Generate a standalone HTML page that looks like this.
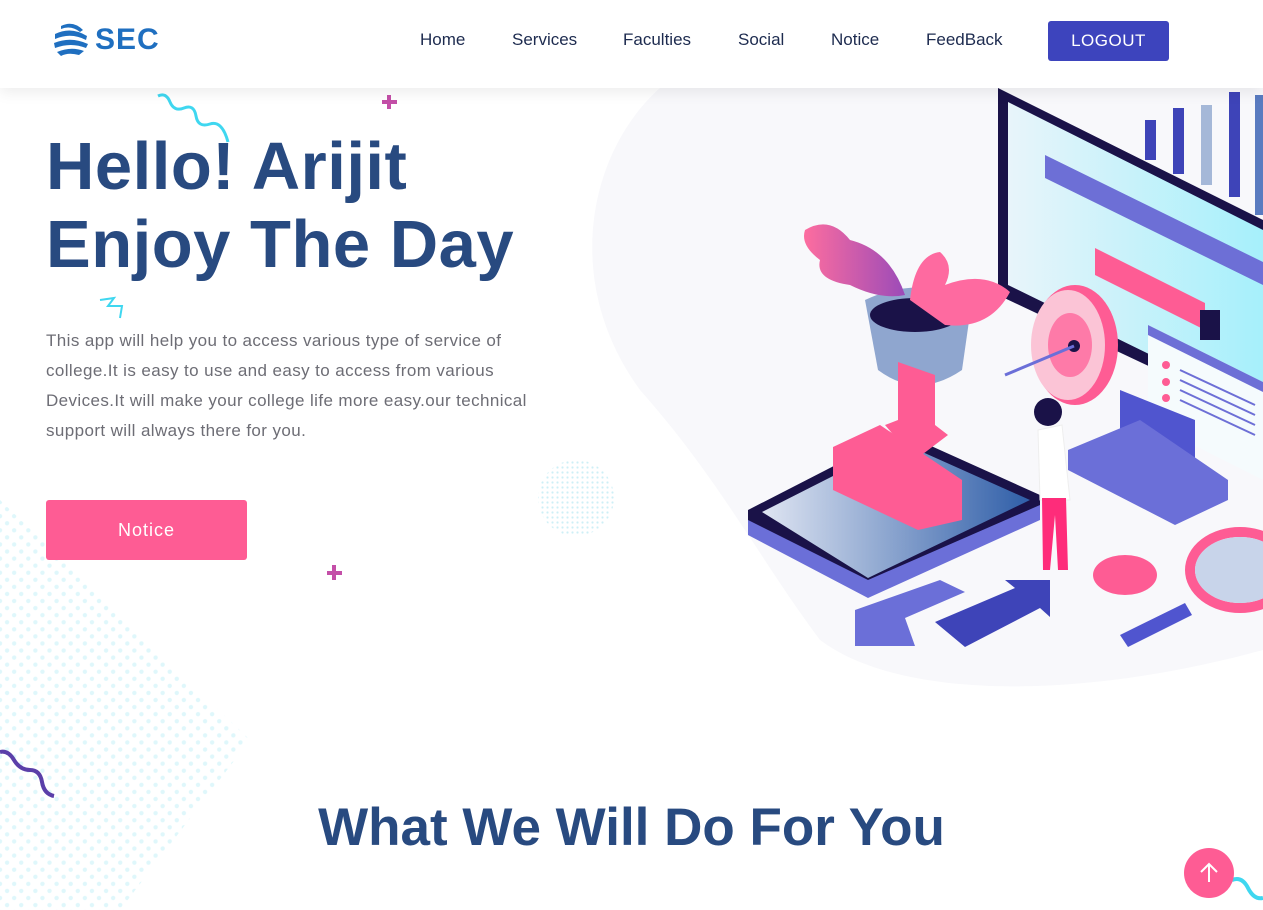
<!DOCTYPE html>
<html><head><meta charset="utf-8"><style>
*{margin:0;padding:0;box-sizing:border-box}
body{width:1263px;height:910px;overflow:hidden;background:#fff;font-family:"Liberation Sans",sans-serif;position:relative}
.nav{position:absolute;top:0;left:0;width:1263px;height:88px;background:#fff;box-shadow:0 4px 14px rgba(0,0,0,.08);z-index:5}
.logo{position:absolute;left:53px;top:22px;display:flex;align-items:center}
.logo span{font-weight:bold;font-size:30px;color:#1f6fc0;margin-left:6px;letter-spacing:1px}
.nav a{position:absolute;top:30px;font-size:17px;color:#1d2b4f;text-decoration:none}
.btn{position:absolute;left:1048px;top:21px;width:121px;height:40px;background:#3d44bd;color:#fff;border-radius:3px;font-size:17px;text-align:center;line-height:40px;letter-spacing:.5px}
h1{position:absolute;left:46px;top:128px;font-size:67px;line-height:78px;color:#284a80;font-weight:bold;letter-spacing:.5px;z-index:2}
p.d{position:absolute;left:46px;top:326px;width:500px;font-size:17px;line-height:30px;color:#6d6d75;letter-spacing:.4px;z-index:2}
.nb{position:absolute;left:46px;top:500px;width:201px;height:60px;background:#fe5c94;border-radius:3px;color:#fff;font-size:18px;text-align:center;line-height:60px;letter-spacing:1px;z-index:2}
h2{position:absolute;left:0;width:1263px;text-align:center;top:797px;font-size:53px;color:#284a80;font-weight:bold}
.up{position:absolute;left:1184px;top:848px;width:50px;height:50px;border-radius:50%;background:#fe5c94;z-index:3}
</style></head><body>
<svg style="position:absolute;left:0;top:0" width="1263" height="910">
<defs>
<pattern id="dt" width="10" height="10" patternUnits="userSpaceOnUse" patternTransform="rotate(45)"><circle cx="5" cy="5" r="2.2" fill="#dff7fb"/></pattern>
<pattern id="dt2" width="5" height="5" patternUnits="userSpaceOnUse"><circle cx="2.5" cy="2.5" r="1.1" fill="#cdeff6"/></pattern>
<linearGradient id="g1" x1="0" x2="1"><stop offset="0" stop-color="#dfe5f2"/><stop offset="1" stop-color="#2f5ea8"/></linearGradient>
<linearGradient id="g2" x1="0" x2="1"><stop offset="0" stop-color="#e8f4fa"/><stop offset="1" stop-color="#a6f0fb"/></linearGradient>
<linearGradient id="g3" x1="0" x2="1"><stop offset="0" stop-color="#fd6d9f"/><stop offset="1" stop-color="#9c4bb8"/></linearGradient>
</defs>
<polygon points="0,500 250,740 120,910 0,910" fill="url(#dt)"/>
<circle cx="576" cy="498" r="38" fill="url(#dt2)"/>
<path d="M660,88 C590,150 560,280 640,390 C720,480 760,560 820,640 C900,700 1080,700 1263,650 L1263,88Z" fill="#f8f8fb"/>
<polygon points="998,88 1263,220 1263,420 998,295" fill="#1a1248"/>
<polygon points="1008,102 1263,230 1263,410 1008,285" fill="url(#g2)"/>
<polygon points="1045,155 1263,262 1263,285 1045,178" fill="#6d6fd6"/>
<polygon points="1095,248 1205,303 1205,330 1095,275" fill="#fe5c94"/>
<rect x="1200" y="310" width="20" height="30" fill="#1a1248"/>
<polygon points="1148,325 1263,382 1263,480 1148,422" fill="#f5fbfd"/>
<polygon points="1148,325 1263,382 1263,392 1148,335" fill="#6d6fd6"/>
<g fill="#fe5c94"><circle cx="1166" cy="365" r="4"/><circle cx="1166" cy="382" r="4"/><circle cx="1166" cy="398" r="4"/></g>
<g stroke="#6d6fd6" stroke-width="2"><line x1="1180" y1="370" x2="1255" y2="405"/><line x1="1180" y1="380" x2="1255" y2="415"/><line x1="1180" y1="390" x2="1255" y2="425"/><line x1="1180" y1="400" x2="1255" y2="435"/></g>
<g fill="#3e44b8"><rect x="1145" y="120" width="11" height="40"/><rect x="1173" y="108" width="11" height="66"/><rect x="1201" y="105" width="11" height="80" fill="#a5b8d8"/><rect x="1229" y="92" width="11" height="105"/><rect x="1255" y="95" width="8" height="120" fill="#5a7bc0"/></g>
<polygon points="1120,390 1195,420 1195,470 1120,440" fill="#5055cf"/>
<polygon points="1068,450 1140,420 1228,480 1228,500 1175,525 1068,470" fill="#6b6fd8"/>
<polygon points="748,510 900,432 1040,495 1040,510 868,590 748,525" fill="#1a1248"/>
<polygon points="762,512 900,442 1030,500 868,578" fill="url(#g1)"/>
<polygon points="748,520 868,580 1040,505 1040,520 868,598 748,535" fill="#6b6fd8"/>
<path d="M865,300 Q918,275 972,300 L962,370 Q918,400 878,370Z" fill="#8fa6cf"/>
<ellipse cx="915" cy="315" rx="45" ry="17" fill="#1a1248"/>
<path d="M805,230 Q830,215 850,240 Q890,250 905,295 Q880,300 850,285 Q815,280 820,260 Q800,245 805,230Z" fill="url(#g3)"/>
<path d="M910,300 Q915,255 940,252 Q955,265 945,285 Q985,270 1010,292 Q990,330 945,325Z" fill="#fe6aa0"/>
<polygon points="898,362 935,375 935,425 948,435 915,460 885,425 898,420" fill="#fe5c94"/>
<polygon points="833,447 880,425 962,480 962,520 918,530 833,490" fill="#fe5c94"/>
<ellipse cx="1075" cy="345" rx="43" ry="60" fill="#fe5c94"/>
<ellipse cx="1068" cy="345" rx="37" ry="55" fill="#fbc4d6"/>
<ellipse cx="1070" cy="345" rx="22" ry="32" fill="#fe7aa8"/>
<circle cx="1074" cy="346" r="6" fill="#1a1248"/>
<line x1="1005" y1="375" x2="1074" y2="346" stroke="#6b6fd8" stroke-width="3"/>
<circle cx="1048" cy="412" r="14" fill="#1a1248"/>
<path d="M1038,430 L1062,425 L1070,500 L1040,500Z" fill="#fff" stroke="#eee"/>
<path d="M1042,498 L1066,498 L1068,570 L1058,570 L1055,515 L1050,570 L1043,570Z" fill="#fe2c7a"/>
<ellipse cx="1125" cy="575" rx="32" ry="20" fill="#fe5c94"/>
<ellipse cx="1240" cy="570" rx="50" ry="38" fill="none" stroke="#fe5c94" stroke-width="10"/>
<ellipse cx="1240" cy="570" rx="45" ry="33" fill="#c8d4ea"/>
<polygon points="1120,635 1185,603 1192,615 1128,647" fill="#5055cf"/>
<polygon points="855,610 940,580 965,592 905,618 915,646 855,646" fill="#6b6fd8"/>
<polygon points="935,622 1015,588 1005,580 1050,580 1050,617 1040,608 965,647" fill="#3e44b8"/>
<path d="M158,96 q8,-4 12,6 t14,6 t12,8 t14,8 t18,18" fill="none" stroke="#3fd7f0" stroke-width="3"/>
<path d="M0,752 q8,-2 14,8 t16,10 t12,12 t12,14" fill="none" stroke="#5b3fa9" stroke-width="4"/>
<path d="M1232,880 q10,-4 16,8 t15,10" fill="none" stroke="#3fd7f0" stroke-width="4"/>
<path d="M100,300 l14,-2 l-6,8 l14,0 l-2,12" fill="none" stroke="#3fd7f0" stroke-width="2"/>
<g fill="#c44fa8"><rect x="382" y="100" width="15" height="4"/><rect x="387" y="95" width="4" height="14"/><rect x="327" y="571" width="15" height="4"/><rect x="332" y="565" width="4" height="15"/></g>
</svg>
<div class="nav">
<div class="logo"><svg width="36" height="36" viewBox="0 0 36 36"><g fill="#1f6fc0"><path d="M8,4 Q20,-2 30,8 L27,10 Q18,3 8,7Z"/><path d="M2,12 Q18,4 34,14 L33,18 Q18,10 2,17Z"/><path d="M1,21 Q18,14 35,22 L33,26 Q18,20 2,26Z"/><path d="M4,30 Q18,24 31,29 L26,33 Q15,30 8,34Z"/></g></svg><span>SEC</span></div>
<a style="left:420px">Home</a><a style="left:512px">Services</a><a style="left:623px">Faculties</a><a style="left:738px">Social</a><a style="left:831px">Notice</a><a style="left:926px">FeedBack</a>
<div class="btn">LOGOUT</div>
</div>
<h1>Hello! Arijit<br>Enjoy The Day</h1>
<p class="d">This app will help you to access various type of service of college.It is easy to use and easy to access from various Devices.It will make your college life more easy.our technical support will always there for you.</p>
<div class="nb">Notice</div>
<h2>What We Will Do For You</h2>
<div class="up"><svg width="50" height="50"><path d="M25,34 V16 M17,24 L25,16 L33,24" stroke="#fff" stroke-width="2" fill="none"/></svg></div>
</body></html>
